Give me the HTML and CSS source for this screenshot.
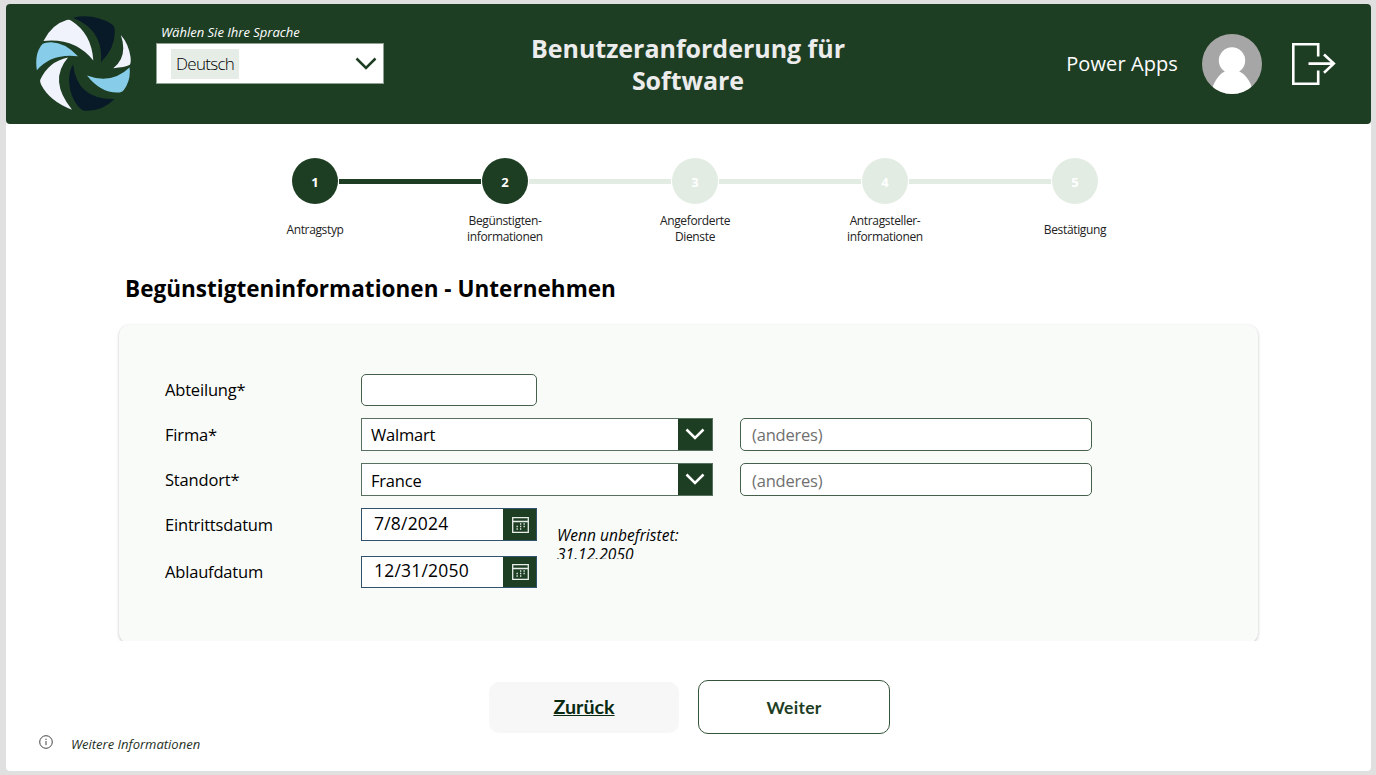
FILE: index.html
```html
<!DOCTYPE html>
<html lang="de">
<head>
<meta charset="utf-8">
<title>Benutzeranforderung für Software</title>
<link rel="stylesheet" href="styles.css">
</head>
<body>
<div class="app">
  <header class="header">
    <svg class="logo" viewBox="108 47 285 286">
      <g fill="#f0f2fc">
        <path d="M130 122Q155 72 200 59Q208 57 215 62Q275 100 280 181Q225 112 130 122Z"/>
        <path d="M363 104Q386 130 392 170Q394 190 390 194Q375 202 340 204Q385 170 363 104Z"/>
        <path d="M204 172Q145 184 120 240Q119 247 123 254Q150 305 216 329Q144 241 204 172Z"/>
      </g>
      <g fill="#081a27">
        <path d="M219 52Q280 38 335 71Q343 76 344 84Q350 140 303 186Q312 90 219 52Z"/>
        <path d="M219 193C198 225 205 290 240 325Q246 332 254 332Q305 336 344 297Q232 300 219 193Z"/>
      </g>
      <g fill="#87cce8">
        <path d="M110 210Q103 165 122 137Q126 130 134 128Q185 116 234 168Q155 158 110 210Z"/>
        <path d="M261 226Q335 254 389 202Q394 240 372 270Q368 276 360 277Q305 282 261 226Z"/>
      </g>
    </svg>
    <div class="language">
      <label class="language-label">Wählen Sie Ihre Sprache</label>
      <div class="language-select">
        <span class="chip">Deutsch</span>
        <svg width="22" height="14" viewBox="0 0 22 14"><path d="M1.5 1.5L11 11L20.500 1.500" fill="none" stroke="#1e3e24" stroke-width="2.500"/></svg>
      </div>
    </div>
    <h1 class="title">Benutzeranforderung für<br>Software</h1>
    <div class="user">
      <span class="user-name">Power Apps</span>
      <svg class="avatar" viewBox="0 0 60 60">
        <defs><clipPath id="face"><circle cx="30" cy="30" r="30"/></clipPath></defs>
        <g clip-path="url(#face)"><path d="M0 0H60V60H0Z" fill="#a6a6a6"/><circle cx="30" cy="26.500" r="13.200" fill="#fff"/><path d="M8 60C13 44 19 38 25 37H35C41 38 48 44 52 60Z" fill="#fff"/></g>
      </svg>
      <svg class="exit" width="46" height="44" viewBox="0 0 46 44"><path d="M27.200 14.500V2.300H2.300V41.700H27.200V28.500M17.500 21.600H43M33 12.500L42.800 21.600L33 30.700" fill="none" stroke="#fff" stroke-width="2.600"/></svg>
    </div>
  </header>

  <ol class="stepper">
    <li class="step done"><span class="dot">1</span><span class="step-label">Antragstyp</span></li>
    <li class="step active"><span class="dot">2</span><span class="step-label">Begünstigten-<br>informationen</span></li>
    <li class="step"><span class="dot">3</span><span class="step-label">Angeforderte<br>Dienste</span></li>
    <li class="step"><span class="dot">4</span><span class="step-label">Antragsteller-<br>informationen</span></li>
    <li class="step"><span class="dot">5</span><span class="step-label">Bestätigung</span></li>
  </ol>

  <h2 class="section-title">Begünstigteninformationen - Unternehmen</h2>

  <div class="card-clip">
    <form class="card">
      <label class="label">Abteilung*</label>
      <div class="input short"></div>
      <label class="label">Firma*</label>
      <div class="select"><span>Walmart</span><span class="arrow"><svg width="20" height="12" viewBox="0 0 20 12"><path d="M1.500 1.500L10 10L18.500 1.500"/></svg></span></div>
      <div class="input other">(anderes)</div>
      <label class="label">Standort*</label>
      <div class="select lower"><span>France</span><span class="arrow"><svg width="20" height="12" viewBox="0 0 20 12"><path d="M1.500 1.500L10 10L18.500 1.500"/></svg></span></div>
      <div class="input other lower">(anderes)</div>
      <label class="label">Eintrittsdatum</label>
      <div class="date"><span class="date-value">7/8/2024</span><span class="calendar"><svg width="17" height="16" viewBox="0 0 17 16"><path d="M.7 .7H16.300V15.300H.7ZM.7 4.500H16.300" fill="none" stroke="#e8eee9" stroke-width="1.300"/><path d="M8 7h1.300M11.500 7h1.300M4.500 9.500h1.300M8 9.500h1.300M11.500 9.500h1.300M4.500 12h1.300M8 12h1.300" stroke="#e8eee9" stroke-width="1.300"/></svg></span></div>
      <p class="hint">Wenn unbefristet: 31.12.2050</p>
      <label class="label">Ablaufdatum</label>
      <div class="date"><span class="date-value">12/31/2050</span><span class="calendar"><svg width="17" height="16" viewBox="0 0 17 16"><path d="M.7 .7H16.300V15.300H.7ZM.7 4.500H16.300" fill="none" stroke="#e8eee9" stroke-width="1.300"/><path d="M8 7h1.300M11.500 7h1.300M4.500 9.500h1.300M8 9.500h1.300M11.500 9.500h1.300M4.500 12h1.300M8 12h1.300" stroke="#e8eee9" stroke-width="1.300"/></svg></span></div>
    </form>
  </div>

  <div class="actions">
    <button class="back">Zurück</button>
    <button class="next">Weiter</button>
  </div>

  <footer class="info">
    <svg width="14" height="14" viewBox="0 0 14 14"><circle cx="7" cy="7" r="6.300" fill="none" stroke="#444" stroke-width="1"/><path d="M7 6V10.200M7 3.700V5" stroke="#444" stroke-width="1"/></svg>
    <span>Weitere Informationen</span>
  </footer>
</div>
</body>
</html>
```
FILE: styles.css
```css
* { box-sizing: border-box; }
body {
  margin: 0;
  height: 775px;
  padding: 4px 5px 4px 6px;
  background: #e0e0e0;
  font-family: "Open Sans", "Noto Sans", sans-serif;
  color: #000;
  overflow: hidden;
}
h1, h2, p, ol { margin: 0; padding: 0; }
svg { display: block; flex: none; }
.app { height: 767px; background: #fff; border-radius: 4px; display: flex; flex-direction: column; }

.header {
  height: 120px;
  flex: none;
  background: #1e3e24;
  border-radius: 4px;
  display: grid;
  grid-template-columns: 150px 250px 564px 1fr;
  color: #fff;
}
.logo { width: 95px; height: 95px; margin: 12px 0 0 30px; }
.language { padding-top: 18px; }
.language-label { display: block; height: 21px; line-height: 20px; padding-left: 5px; font-size: 13px; font-style: italic; white-space: nowrap; }
.language-select {
  width: 228px; height: 41px;
  border: 1px solid #8fa092;
  background: #fff;
  display: flex; align-items: center; justify-content: space-between;
  padding: 0 6px 0 14px;
}
.chip { height: 30px; line-height: 30px; padding: 0 5px; background: #e6ede7; color: #000; font-size: 17px; font-weight: 300; letter-spacing: -0.7px; }
.title { padding-top: 28px; text-align: center; font-size: 25px; line-height: 32px; font-weight: 700; letter-spacing: -0.02px; color: #ececec; }
.user { display: flex; align-items: center; justify-content: flex-end; padding: 0 34px 1px 0; }
.user-name { font-size: 20px; letter-spacing: 0.1px; padding-bottom: 1px; }
.avatar { width: 60px; height: 60px; margin: 0 29px 0 24px; }

.stepper { list-style: none; display: flex; justify-content: center; margin: 34px 0 0 13px; height: 90px; align-self: flex-start; padding-left: 201px; flex: none; }
.step { width: 190px; display: grid; grid-template-rows: 46px 52px; justify-items: center; grid-template-columns: 1fr 48px 1fr; }
.dot { grid-column: 2; width: 46px; height: 46px; border-radius: 50%; background: #e2ece3; color: #fff; font-size: 13px; font-weight: 700; line-height: 48px; text-align: center; }
.done .dot, .active .dot { background: #1e3e24; }
.step::before, .step::after { content: ""; grid-row: 1; height: 5px; width: 100%; align-self: center; background: #e2ece3; }
.step::before { grid-column: 1; }
.step::after { grid-column: 3; }
.done::after, .active::before { background: #1e3e24; }
.step:first-child::before, .step:last-child::after { visibility: hidden; }
.step-label { grid-column: 1 / 4; grid-row: 2; align-self: center; font-size: 12px; line-height: 16px; text-align: center; letter-spacing: -0.35px; color: #222; }
.step-label:has(br) { padding-bottom: 2px; }

.section-title { height: 36px; line-height: 36px; margin: 23px 0 0 119px; font-size: 22.5px; font-weight: 700; letter-spacing: 0.03px; flex: none; white-space: nowrap; }

.card-clip { height: 320px; margin: 14px 108px 0 109px; padding: 4px; overflow: hidden; flex: none; }
.card {
  height: 318px;
  margin-right: 1px;
  background: #f9fbf8;
  border-radius: 10px;
  box-shadow: 0 1px 3px rgba(0, 0, 0, .25);
  display: grid;
  grid-template-columns: 196px 176px 20px 156px 27px 352px;
  grid-template-rows: 32px 33px 33px 33px 32px;
  row-gap: 12px;
  padding: 49px 0 0 46px;
  font-size: 16.5px;
}
.label { grid-column: 1; line-height: 34px; letter-spacing: -0.18px; }
.label:first-child, .hint + .label { line-height: 32px; }
.input { border: 1px solid #46614b; border-radius: 5px; background: #fff; }
.short { grid-column: 2; }
.select { grid-column: 2 / 5; border: 1px solid #587060; background: #fff; display: flex; justify-content: space-between; align-items: center; padding-left: 9px; letter-spacing: -0.2px; }
.arrow, .calendar { width: 34px; height: 100%; background: #1e3e24; display: flex; align-items: center; justify-content: center; flex: none; }
.arrow { padding-bottom: 2px; }
.arrow path { fill: none; stroke: #fff; stroke-width: 2.5; }
.calendar { width: 33px; padding-left: 1px; }
.other { grid-column: 6; padding-left: 11px; line-height: 32px; color: #707070; letter-spacing: -0.2px; }
.lower > span:first-child { padding-top: 2px; }
.other.lower { line-height: 34px; }
.date { grid-column: 2; border: 1px solid #31516c; background: #fff; display: flex; justify-content: space-between; align-items: center; padding-left: 12px; }
.date-value { font-size: 17.5px; letter-spacing: 0.2px; padding-bottom: 4px; }
.hint { grid-column: 4 / 6; height: 33px; margin-top: 18px; overflow: hidden; font-size: 15.5px; line-height: 19px; font-style: italic; width: 135px; letter-spacing: 0.05px; }
.hint + .label, .hint ~ .date { margin-top: 3px; margin-bottom: -3px; }

.actions { display: flex; align-items: center; gap: 19px; margin: 39px 0 0 483px; flex: none; }
.actions button { font-family: Lato, sans-serif; font-weight: 700; border-radius: 10px; padding: 0; }
.back { width: 190px; height: 51px; border: 0; background: #f7f7f7; color: #0a2a12; font-size: 19.7px; text-decoration: underline; }
.actions .back { padding-bottom: 2px; }
.next { width: 192px; height: 54px; border: 1px solid #35543c; background: #fff; color: #1e3e24; font-size: 17.5px; letter-spacing: 0.3px; }

.info { display: flex; align-items: flex-start; gap: 18px; padding: 1px 0 0 33px; font-size: 13px; font-style: italic; line-height: 18px; color: #1e3023; }
```
